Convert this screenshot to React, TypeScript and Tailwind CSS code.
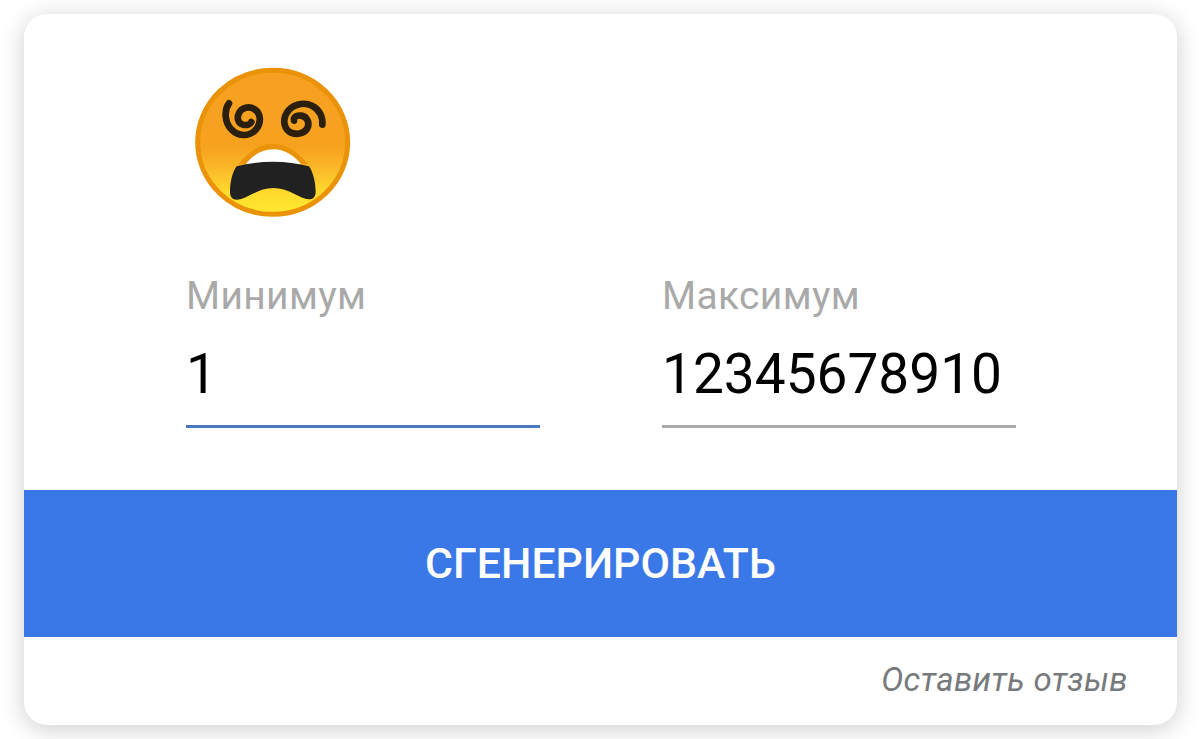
import React, { useState } from "react";
import classNames from "clsx";

const DizzyFace: React.FC = () => (
  <svg
    className="w-[180px] h-[170px]"
    viewBox="0 0 540 510"
    fill="none"
    aria-hidden="true"
  >
    <defs>
      <linearGradient id="face" x1="0" y1="40" x2="0" y2="484" gradientUnits="userSpaceOnUse">
        <stop offset="0" stopColor="#f6a021" />
        <stop offset="0.54" stopColor="#f6a21f" />
        <stop offset="0.7" stopColor="#fbbd29" />
        <stop offset="0.85" stopColor="#ffdc2d" />
        <stop offset="1" stopColor="#ffe930" />
      </linearGradient>
    </defs>
    <ellipse cx="263" cy="262" rx="225" ry="216" fill="url(#face)" stroke="#ea9208" strokeWidth="15" />
    <path d="M160 328C190 291 224 266 263 266C304 266 340 292 370 328Z" fill="#ea9208" />
    <path d="M182 328C203 300 231 283 264 283C299 283 328 302 348 328Z" fill="#fff" />
    <path
      d="M155 334C188 325 226 320 264 320C302 320 340 325 372 334C384 350 392 382 392 410C392 426 384 433 371 433C346 433 314 399 264 399C217 399 184 434 155 434C142 434 135 426 135 411C135 382 142 351 155 334Z"
      fill="#212121"
    />
    <g stroke="#2b1f0d" strokeWidth="20" strokeLinecap="round" strokeLinejoin="round">
      <path d="M132 145C117 164 118 203 140 224C161 246 195 245 213 223C230 203 228 175 209 163C192 152 170 158 162 174C154 190 160 205 174 209C186 212 196 208 199 201" />
      <path d="M412 209C414 187 404 163 381 152C353 139 319 150 305 174C291 197 298 226 321 234C341 241 363 233 369 215C374 198 363 184 348 182C333 180 325 187 327 197" />
    </g>
  </svg>
);

type FieldProps = {
  label: string;
  value: string;
  active?: boolean;
  onChange: (value: string) => void;
};

const NumberField: React.FC<FieldProps> = ({ label, value, active, onChange }) => (
  <label className="flex flex-col">
    <span className="text-[39px] leading-[46px] tracking-[0.35px] text-[#a9a9a9]">{label}</span>
    <input
      className={classNames(
        "mt-[19px] h-[90px] w-full border-b-[3px] bg-transparent p-0 pb-[15px] text-[55px] leading-none text-black outline-none",
        active ? "border-[#4779be]" : "border-[#a9a9a9]"
      )}
      inputMode="numeric"
      value={value}
      onChange={(e) => onChange(e.target.value)}
    />
  </label>
);

export default function App() {
  const [min, setMin] = useState("1");
  const [max, setMax] = useState("12345678910");

  return (
    <main className="h-[739px] w-full overflow-hidden bg-white px-[24px] pt-[14px] font-['Roboto',sans-serif]">
      <section className="flex h-[711px] w-[1153px] flex-col overflow-hidden rounded-[23px] bg-white shadow-[0_4px_24px_rgba(0,0,0,0.2)]">
        <div className="h-[476px] px-[161px] pt-[41px]">
          <DizzyFace />
          <div className="mt-[48px] ml-px grid grid-cols-[354px_354px] gap-x-[122px]">
            <NumberField label="Минимум" value={min} onChange={setMin} active />
            <NumberField label="Максимум" value={max} onChange={setMax} />
          </div>
        </div>
        <button className="h-[147px] bg-[#3a78e7] text-[42.8px] font-medium text-white">
          СГЕНЕРИРОВАТЬ
        </button>
        <footer className="flex flex-1 items-center justify-end pr-[49px] pb-[2px]">
          <a className="text-[33px] tracking-[0.35px] text-[#777a7c] italic" href="#">
            Оставить отзыв
          </a>
        </footer>
      </section>
    </main>
  );
}
